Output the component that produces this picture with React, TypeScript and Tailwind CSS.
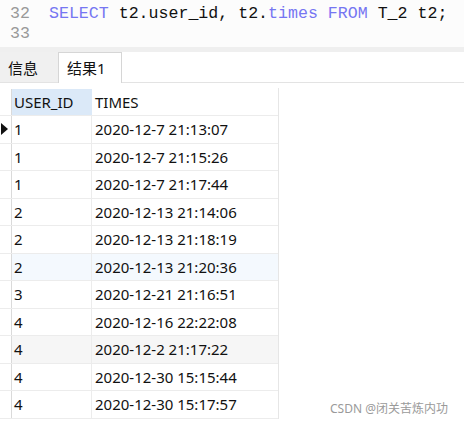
const rows: { id: string; time: string; bg?: string }[] = [
  { id: "1", time: "2020-12-7 21:13:07" },
  { id: "1", time: "2020-12-7 21:15:26" },
  { id: "1", time: "2020-12-7 21:17:44" },
  { id: "2", time: "2020-12-13 21:14:06" },
  { id: "2", time: "2020-12-13 21:18:19" },
  { id: "2", time: "2020-12-13 21:20:36", bg: "bg-[#f4f9fe]" },
  { id: "3", time: "2020-12-21 21:16:51" },
  { id: "4", time: "2020-12-16 22:22:08" },
  { id: "4", time: "2020-12-2 21:17:22", bg: "bg-[#f6f6f6]" },
  { id: "4", time: "2020-12-30 15:15:44" },
  { id: "4", time: "2020-12-30 15:17:57" },
];

const mono = { fontFamily: "'Liberation Mono', 'Courier New', monospace" };

export default function App() {
  return (
    <div
      className="relative w-[464px] h-[426px] overflow-hidden bg-white text-[#111]"
      style={{ fontFamily: "'Noto Sans', 'Noto Sans CJK SC', sans-serif" }}
    >
      {/* editor */}
      <div className="flex h-[47px] bg-[#fcfcfc] pt-[4px] text-[16.6px] leading-[20px]" style={mono}>
        <div className="w-[49px] pl-[10px] text-[#999]">
          <div>32</div>
          <div>33</div>
        </div>
        <div className="whitespace-pre">
          <span className="text-[#7676f2]">SELECT</span> t2.user_id, t2.
          <span className="text-[#7676f2]">times</span> <span className="text-[#7676f2]">FROM</span> T_2 t2;
        </div>
      </div>
      <div className="h-[5px] bg-[#efefef]" />

      {/* tabs */}
      <div className="flex items-end h-[31px] border-b border-[#e3e3e3]">
        <div className="w-[58px] h-[30px] bg-[#f0f0f0] pl-[8px] pt-[2px] flex items-center text-[15px]">
          信息
        </div>
        <div className="w-[64px] h-[31px] -mb-px bg-white border-x border-t border-[#d6d6d6] pl-[8px] flex items-center text-[15px]">
          结果1
        </div>
      </div>

      {/* grid */}
      <div className="mt-[5px] w-[279px] border-r border-[#e6e6e6] text-[15px]">
        <div className="flex h-[28px] pt-[1px] border-b border-[#ececec]">
          <div className="w-[12px] border-r border-[#dadada]" />
          <div className="w-[80px] bg-[#dbe9f8] pl-[2px] flex items-center">USER_ID</div>
          <div className="flex-1 pl-[3px] flex items-center">TIMES</div>
        </div>
        {rows.map((r, i) => (
          <div key={i} className={`flex h-[27.5px] border-b border-[#ececec] ${r.bg ?? ""}`}>
            <div className="w-[12px] border-r border-[#dadada] bg-white flex items-center">
              {i === 0 && (
                <svg width="8" height="12" viewBox="0 0 8 12" className="ml-[1px]">
                  <path d="M0 0 L7 6 L0 12 Z" fill="#111" />
                </svg>
              )}
            </div>
            <div className="w-[80px] pl-[2px] border-r border-[#ececec] flex items-center">{r.id}</div>
            <div className="flex-1 pl-[3px] flex items-center">{r.time}</div>
          </div>
        ))}
      </div>

      <div className="absolute right-[16px] bottom-[8px] text-[12px] text-[#9a9a9a]">CSDN @闭关苦炼内功</div>
    </div>
  );
}
